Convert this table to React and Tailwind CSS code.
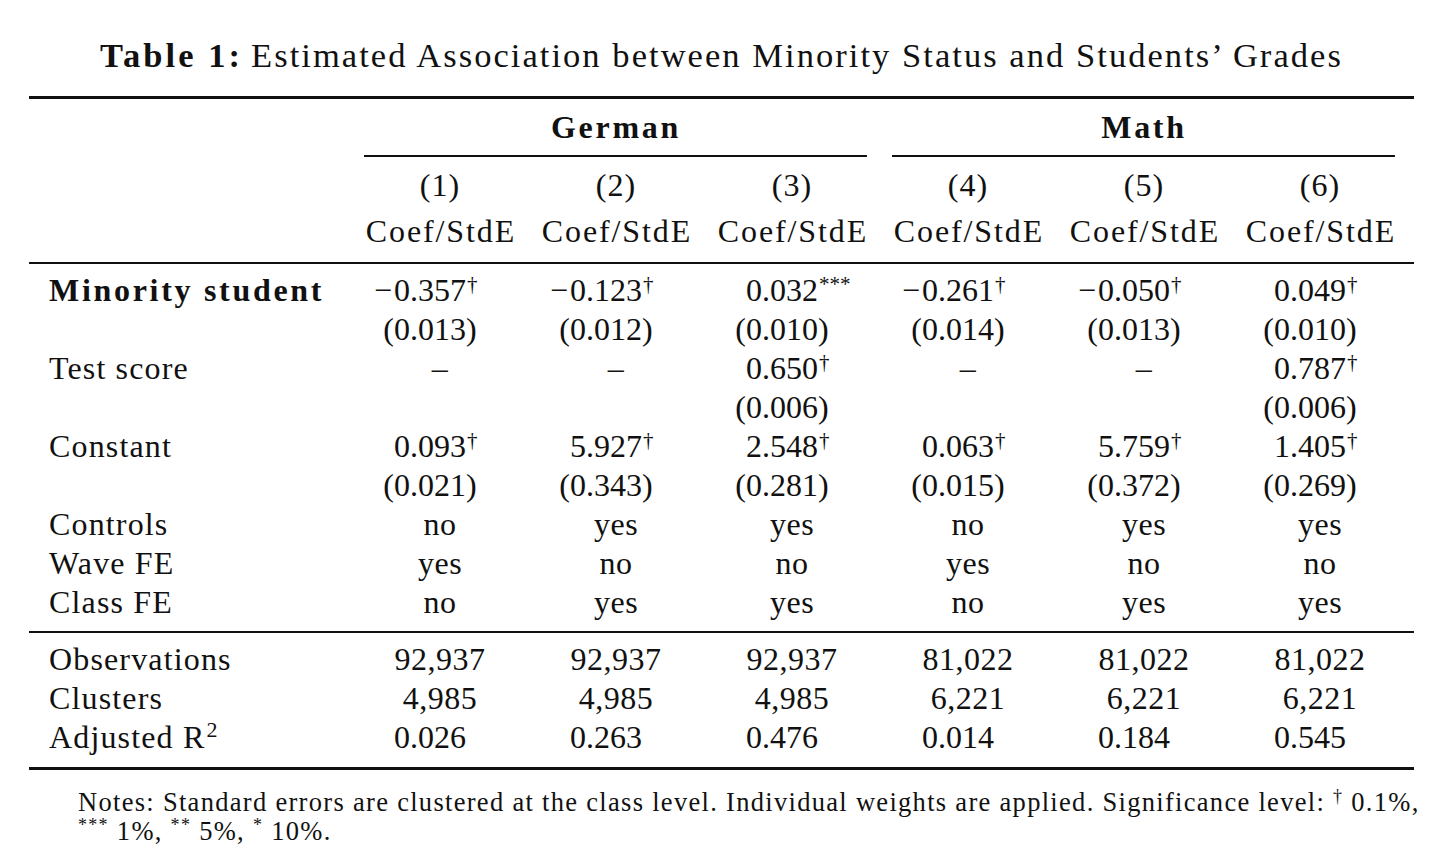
import React from "react";

const DAG = "\u2020";
const M = "\u2212";

const rows = [
  {
    label: "Minority student",
    bold: true,
    cells: [
      { a: 1, pre: M, v: "0.357", sup: DAG },
      { a: 1, pre: M, v: "0.123", sup: DAG },
      { a: 1, pre: "", v: "0.032", sup: "***" },
      { a: 1, pre: M, v: "0.261", sup: DAG },
      { a: 1, pre: M, v: "0.050", sup: DAG },
      { a: 1, pre: "", v: "0.049", sup: DAG },
    ],
  },
  {
    label: "",
    cells: ["0.013", "0.012", "0.010", "0.014", "0.013", "0.010"].map((v) => ({ a: 1, pre: "(", v: v + ")" })),
  },
  {
    label: "Test score",
    cells: [
      { c: "\u2013" },
      { c: "\u2013" },
      { a: 1, pre: "", v: "0.650", sup: DAG },
      { c: "\u2013" },
      { c: "\u2013" },
      { a: 1, pre: "", v: "0.787", sup: DAG },
    ],
  },
  {
    label: "",
    cells: [{ c: "" }, { c: "" }, { a: 1, pre: "(", v: "0.006)" }, { c: "" }, { c: "" }, { a: 1, pre: "(", v: "0.006)" }],
  },
  {
    label: "Constant",
    cells: ["0.093", "5.927", "2.548", "0.063", "5.759", "1.405"].map((v) => ({ a: 1, pre: "", v, sup: DAG })),
  },
  {
    label: "",
    cells: ["0.021", "0.343", "0.281", "0.015", "0.372", "0.269"].map((v) => ({ a: 1, pre: "(", v: v + ")" })),
  },
  { label: "Controls", cells: ["no", "yes", "yes", "no", "yes", "yes"].map((c) => ({ c })) },
  { label: "Wave FE", cells: ["yes", "no", "no", "yes", "no", "no"].map((c) => ({ c })) },
  { label: "Class FE", cells: ["no", "yes", "yes", "no", "yes", "yes"].map((c) => ({ c })) },
];

const stats = [
  { label: "Observations", cells: ["92,937", "92,937", "92,937", "81,022", "81,022", "81,022"].map((c) => ({ c })) },
  { label: "Clusters", cells: ["4,985", "4,985", "4,985", "6,221", "6,221", "6,221"].map((c) => ({ c })) },
  {
    label: "Adjusted R",
    r2: true,
    cells: ["0.026", "0.263", "0.476", "0.014", "0.184", "0.545"].map((v) => ({ a: 1, pre: "", v })),
  },
];

function Cell({ cell }) {
  if (cell.a) {
    return (
      <div className="flex h-[39px] items-center leading-[39px]">
        <span className={"w-[42px] shrink-0 text-right " + (cell.pre === M ? "pr-[2px]" : "")}>{cell.pre}</span>
        <span className="whitespace-nowrap">
          {cell.v}
          {cell.sup ? <sup className="ml-[1px] text-[21px]">{cell.sup}</sup> : null}
        </span>
      </div>
    );
  }
  return (
    <div className="h-[39px] text-center leading-[39px] tracking-[0.5px]">{cell.c}</div>
  );
}

function Row({ row }) {
  return (
    <div className="grid h-[39px] grid-cols-[323px_repeat(6,176px)]">
      <div
        className={
          "h-[39px] whitespace-nowrap pl-[20px] leading-[39px] " +
          (row.bold ? "font-bold tracking-[2.7px]" : "tracking-[1.15px]")
        }
      >
        {row.label}
        {row.r2 ? <sup className="ml-[1px] text-[22px] tracking-normal">2</sup> : null}
      </div>
      {row.cells.map((c, i) => (
        <Cell key={i} cell={c} />
      ))}
    </div>
  );
}

export default function App() {
  return (
    <div className="h-[859px] w-[1456px] overflow-hidden bg-white text-[32px] text-[#111] font-['Liberation_Serif','Times_New_Roman',serif]">
      <div className="ml-[29px] w-[1385px]">
        {/* Title */}
        <div className="h-[96px] pt-[35px]">
          <div className="h-[40px] whitespace-nowrap text-center text-[34.5px] leading-[40px]">
            <span className="font-bold tracking-[3.05px]">Table 1:</span>
            <span className="ml-[8px] tracking-[2.05px]">
              Estimated Association between Minority Status and Students’ Grades
            </span>
          </div>
        </div>

        {/* top rule */}
        <div className="h-[3px] bg-[#111]" />

        {/* German / Math */}
        <div className="grid h-[56px] grid-cols-[323px_528px_528px] items-center">
          <div />
          <div className="text-center font-bold leading-[39px] tracking-[2.7px]">German</div>
          <div className="text-center font-bold leading-[39px] tracking-[2.7px]">Math</div>
        </div>

        {/* cmidrules */}
        <div className="grid h-[1.5px] grid-cols-[323px_528px_528px]">
          <div />
          <div className="ml-[12px] mr-[13px] bg-[#111]" />
          <div className="ml-[12px] mr-[13px] bg-[#111]" />
        </div>

        <div className="h-[9.5px]" />

        {/* (1) .. (6) */}
        <div className="grid h-[39px] grid-cols-[323px_repeat(6,176px)]">
          <div />
          {[1, 2, 3, 4, 5, 6].map((n) => (
            <div key={n} className="text-center leading-[39px] tracking-[1px]">
              ({n})
            </div>
          ))}
        </div>

        <div className="h-[7px]" />

        <div className="grid h-[39px] grid-cols-[323px_repeat(6,176px)]">
          <div />
          {[1, 2, 3, 4, 5, 6].map((n) => (
            <div key={n} className="whitespace-nowrap pl-[2px] text-center leading-[39px] tracking-[1.9px]">
              Coef/StdE
            </div>
          ))}
        </div>

        <div className="h-[10.5px]" />
        <div className="h-[2px] bg-[#111]" />
        <div className="h-[7.5px]" />

        {rows.map((r, i) => (
          <Row key={i} row={r} />
        ))}

        <div className="h-[8.5px]" />
        <div className="h-[2px] bg-[#111]" />
        <div className="h-[7.5px]" />

        {stats.map((r, i) => (
          <Row key={i} row={r} />
        ))}

        <div className="h-[9.5px]" />
        <div className="h-[3px] bg-[#111]" />
      </div>

      {/* Notes */}
      <div className="ml-[78px] mt-[18.5px] text-[26.5px] leading-[29px] tracking-[1.3px]">
        <div className="whitespace-nowrap">
          Notes: Standard errors are clustered at the class level. Individual weights are applied. Significance level:{" "}
          <sup className="text-[18px]">{DAG}</sup> 0.1%,
        </div>
        <div className="whitespace-nowrap">
          <sup className="text-[18px]">***</sup> 1%, <sup className="text-[18px]">**</sup> 5%,{" "}
          <sup className="text-[18px]">*</sup> 10%.
        </div>
      </div>
    </div>
  );
}
